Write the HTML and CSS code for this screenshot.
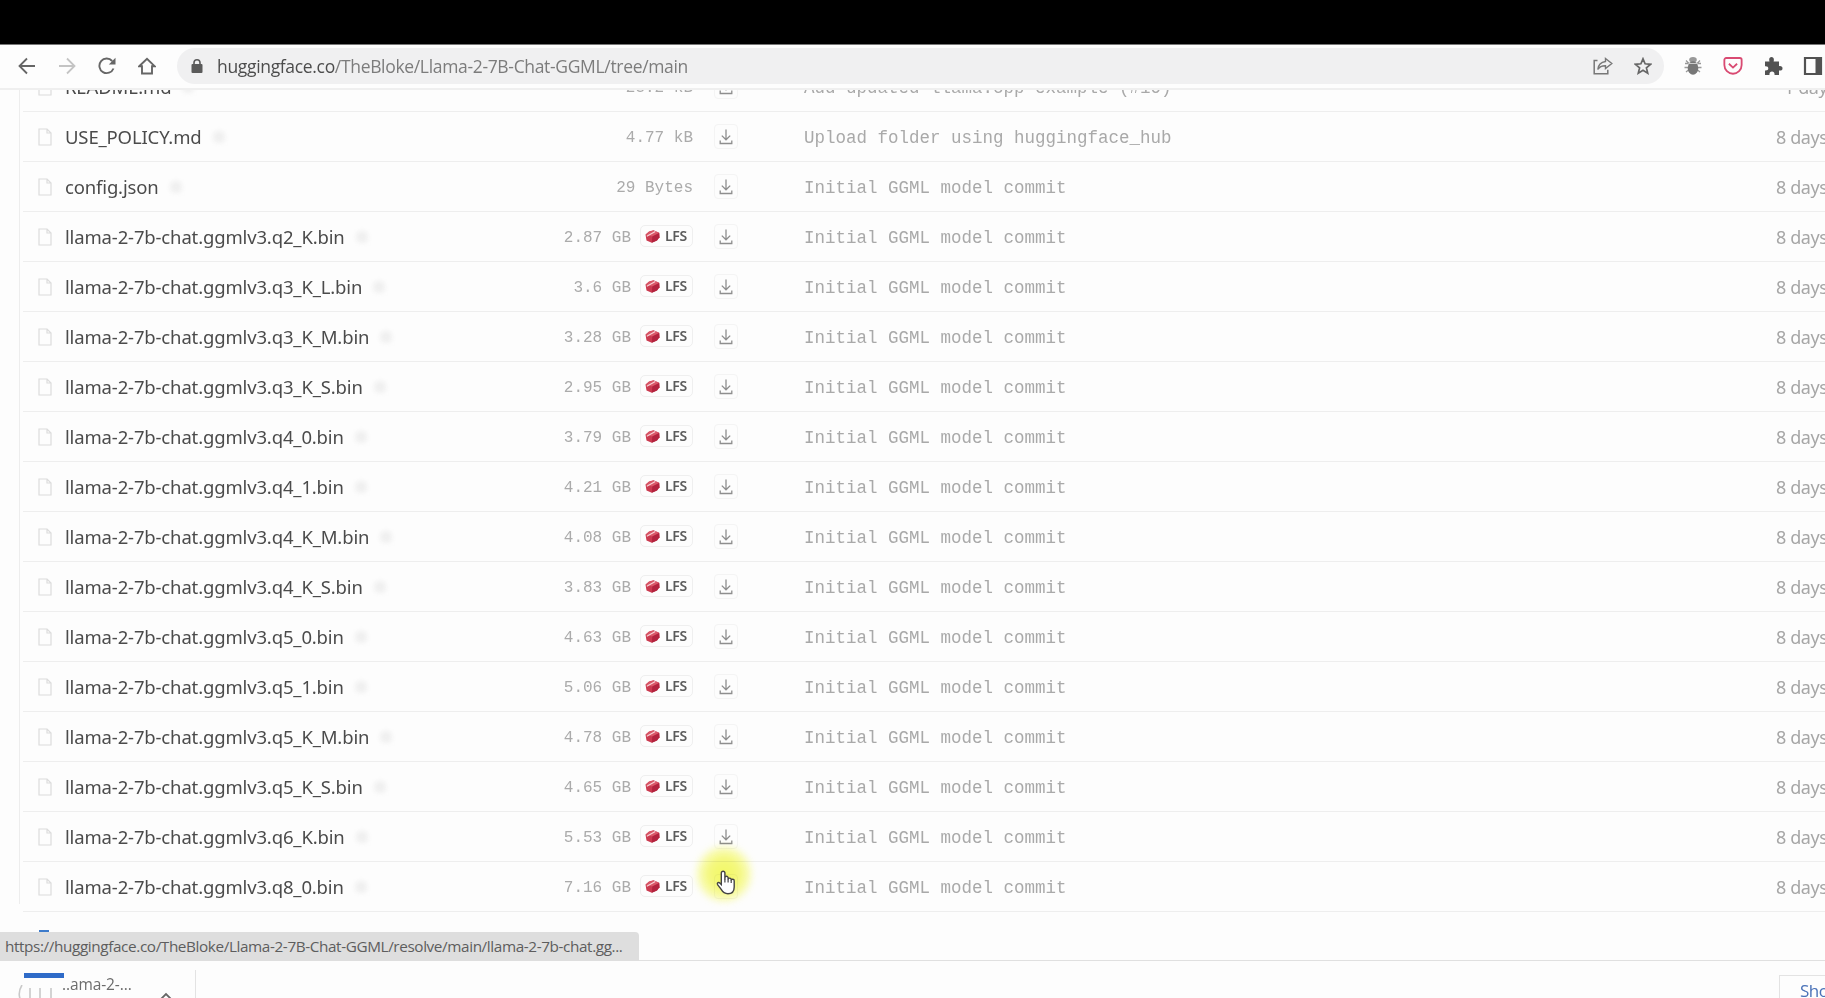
FILE: index.html
```html
<!DOCTYPE html>
<html lang="en">
<head>
<meta charset="utf-8">
<title>TheBloke/Llama-2-7B-Chat-GGML</title>
<link rel="stylesheet" href="styles.css">
</head>
<body>
<svg class="defs" width="0" height="0">
  <symbol id="file" viewBox="0 0 14 18"><path d="M1 1h8l4 4v12H1zM9 1v4h4" fill="none" stroke="currentColor" stroke-width="1.2"/></symbol>
  <symbol id="down" viewBox="0 0 14 16"><path d="M7 .5v10M2.8 6.6 7 10.8l4.200-4.200M1.200 11.500v3h11.600v-3" fill="none" stroke="currentColor" stroke-width="1.300"/></symbol>
  <symbol id="lfs" viewBox="0 0 15 13"><path d="M.5 4.500 4 1.500 8.500.2l5.700 2.600.3 4.500-2.500 3.200-5.200 2.300L1.500 10.500z" fill="#cb3a50"/><path d="M.8 4.800 4 1.800 8.500.4l5.700 2.600L7.300 6.600z" fill="#d95767"/><path d="M7.300 6.600 14.200 3l.2 4.300-2.400 3.200-5.200 2.200z" fill="#b3243f"/><path d="m1.800 6.200 8.500-4.700" stroke="#f8d3d7" stroke-width="1.200"/></symbol>
</svg>
<div class="letterbox"></div>
<header class="toolbar">
  <nav class="nav">
    <svg viewBox="0 0 18 18"><path d="M17 9H2M9 1.500 1.500 9 9 16.500" fill="none" stroke="#666" stroke-width="1.800"/></svg>
    <svg viewBox="0 0 18 18"><path d="M1 9h15M9 1.500 16.500 9 9 16.500" fill="none" stroke="#c4c4c4" stroke-width="1.800"/></svg>
    <svg viewBox="0 0 18 18"><path d="M15.500 11.500A7.300 7.300 0 1 1 14.200 4" fill="none" stroke="#666" stroke-width="1.900"/><path d="M17.500.8v6.700h-6.700z" fill="#666"/></svg>
    <svg viewBox="0 0 18 18"><path d="M1.200 9.300 9 1.800l7.800 7.500H14v7.200H4V9.300z" fill="none" stroke="#666" stroke-width="1.900"/></svg>
  </nav>
  <div class="omnibox">
    <svg class="lock" viewBox="0 0 12 14"><rect x=".5" y="5" width="11" height="9" rx="1" fill="#5a5a5a"/><path d="M3 6V3.800a3 3 0 0 1 6 0V6" fill="none" stroke="#5a5a5a" stroke-width="1.600"/></svg>
    <span class="url"><b>huggingface.co</b>/TheBloke/Llama-2-7B-Chat-GGML/tree/main</span>
    <svg class="share" viewBox="0 0 20 18"><path d="M4.500 3.500H1.200v13.300h13.600v-4" fill="none" stroke="#777" stroke-width="1.500"/><path d="M12.500 1.500 18.800 6.500l-6.300 5V8.700C8.500 8.600 6.300 10 4.800 12.500 5.200 8.500 7.500 5.200 12.500 4.500z" fill="none" stroke="#777" stroke-width="1.400"/></svg>
    <svg class="star" viewBox="0 0 18 18"><path d="m9 1.800 2.100 5 5.400.5-4.100 3.500 1.300 5.300L9 13.200l-4.700 2.900 1.300-5.300L1.500 7.300l5.400-.5z" fill="none" stroke="#666" stroke-width="1.700"/></svg>
  </div>
  <div class="extensions">
    <svg viewBox="0 0 20 20"><path d="M2 7.500h16M1.500 11.500h17M3 16l3-2.500M17 16l-3-2.500M3 4.500l3 3M17 4.500l-3 3" stroke="#999" stroke-width="1.300"/><ellipse cx="10" cy="3.800" rx="3.800" ry="2.800" fill="#999"/><ellipse cx="10" cy="12" rx="5.300" ry="6.800" fill="#777"/><path d="M5.300 7.500h9.400" stroke="#ccc"/></svg>
    <svg viewBox="0 0 22 20"><path d="M3.500 1.200h15a2 2 0 0 1 2 2V9a9.500 9.500 0 0 1-19 0V3.200a2 2 0 0 1 2-2z" fill="none" stroke="#d94a72" stroke-width="2"/><path d="m6.500 7.500 4.500 4.200 4.500-4.200" fill="none" stroke="#d94a72" stroke-width="2"/></svg>
    <svg viewBox="0 0 20 20"><path d="M2 5.500h4.500C5.600 2.500 6.700 1 8.500 1s3 1.500 2.100 4.500H16v4.700c2.300-.4 3.500.6 3.500 2.200s-1.200 2.500-3.500 2.100V19h-4.500c.3-2.300-.8-3.400-2.500-3.400S6.200 16.700 6.500 19H2v-4.500c2.300.2 3.300-.7 3.300-2.200S4.300 10 2 10.200z" fill="#525252"/></svg>
    <svg viewBox="0 0 20 20"><path d="M2 2h16v16H2z" fill="none" stroke="#525252" stroke-width="2.200"/><path d="M12.500 2H18v16h-5.500z" fill="#525252"/></svg>
  </div>
</header>
<main class="page"><div class="files" id="files"></div></main>
<div class="tick"></div>
<div class="status"><span>https://huggingface.co/TheBloke/Llama-2-7B-Chat-GGML/resolve/main/llama-2-7b-chat.gg...</span></div>
<footer class="shelf">
  <div class="download">
    <div class="thumb"><i></i><svg viewBox="0 0 36 16"><path d="M4 0Q-1 8 3 16M12 3v13M22 3v10M33 3v13" fill="none" stroke="#c9c9c9" stroke-width="1.600"/><path d="M13 15h10" stroke="#ddd"/></svg></div>
    <span class="dlname">..ama-2-...</span>
    <svg class="chev" viewBox="0 0 12 8"><path d="m1 7 5-5 5 5" fill="none" stroke="#666" stroke-width="1.800"/></svg>
  </div>
  <div class="showall">Show all</div>
</footer>
<div class="halo"></div>
<svg class="hand" viewBox="0 0 20 25"><path d="M5.300 14.500V3a1.800 1.800 0 0 1 3.600 0v6.500-1.700a1.600 1.600 0 0 1 3.200.2v1.200a1.600 1.600 0 0 1 3.100.3v1a1.500 1.500 0 0 1 3 .4v6c0 4-2.300 6.800-6.300 6.800-3.500 0-5.200-1.700-6.700-4.300L1.600 14.600c-.9-1.700 1-2.900 2.200-1.600z" fill="#fff" stroke="#444" stroke-width="1.400"/><path d="M8.900 9v3.500M12.100 9v3.500M15.200 10v3" stroke="#444" stroke-width="1.200"/></svg>
<script src="files.js"></script>
</body>
</html>
```
FILE: styles.css
```css
* { box-sizing: border-box; }
body { margin: 0; width: 1825px; height: 998px; overflow: hidden; background: #fdfdfd; font-family: "Noto Sans", sans-serif; display: flex; flex-direction: column; position: relative; }
svg { display: block; flex: none; }
.defs { position: absolute; }
.letterbox { height: 45px; background: #000; border-bottom: 1px solid #777; flex: none; }
.toolbar { height: 45px; flex: none; display: flex; align-items: center; background: #fdfdfd; border-bottom: 2px solid #efefef; padding-bottom: 1px; }
.nav { width: 177px; padding-left: 18px; display: flex; gap: 22px; }
.nav svg { width: 18px; height: 18px; }
.omnibox { width: 1487px; height: 36px; border-radius: 18px; background: #f0f0f1; display: flex; align-items: center; }
.lock { width: 12px; height: 14px; margin-left: 14px; }
.url { margin-left: 14px; font: 17.500px/34px "Open Sans", sans-serif; letter-spacing: -0.330px; color: #7c7c7c; white-space: nowrap; }
.url b { font-weight: 400; color: #4c4c4c; }
.share { width: 20px; height: 18px; margin-left: auto; }
.star { width: 18px; height: 18px; margin: 0 12px 0 21px; }
.extensions { display: flex; align-items: center; gap: 20px; padding-left: 19px; }
.extensions svg { width: 20px; height: 20px; }
.page { height: 870px; flex: none; overflow: hidden; padding-left: 19px; }
.files { height: 814px; border-left: 1px solid #ededed; padding-left: 3px; display: flex; flex-direction: column; justify-content: flex-end; }
.row { height: 50px; flex: none; border-bottom: 1px solid #eee; display: grid; grid-template-columns: 42px 498px 130px 21px 24px 66px 1fr 49px; align-items: center; }
.files .row:last-child { margin-bottom: -8px; }
.icon { width: 14px; height: 18px; margin-left: 15px; color: #dcdcdc; }
.name { display: flex; align-items: center; font-size: 18.5px; letter-spacing: -0.150px; color: #4b4b4b; white-space: nowrap; }
.mark { width: 12px; height: 12px; margin-left: 11px; border-radius: 5px; background: #f0f0f0; filter: blur(2px); }
.size { display: flex; justify-content: flex-end; align-items: center; gap: 9px; font: 16px/24px "Liberation Mono", monospace; color: #ababab; white-space: nowrap; padding-top: 2px; }
.badge { display: flex; align-items: center; width: 53px; height: 22px; margin-top: -3px; padding-left: 4px; gap: 5px; border: 1px solid #efefef; border-radius: 5px; font: 600 14px/20px "Noto Sans", sans-serif; letter-spacing: -0.400px; color: #5c5c5c; }
.badge svg { width: 15px; height: 13px; }
.get { width: 24px; height: 25px; border: 1px solid #f4f4f4; border-radius: 4px; display: grid; place-items: center; color: #8e8e8e; grid-column: 5; }
.get svg { width: 14px; height: 16px; }
.message { grid-column: 7; font: 17.500px/24px "Liberation Mono", monospace; color: #a9a9a9; white-space: nowrap; padding-top: 2px; }
.age { font-size: 18px; letter-spacing: -0.400px; color: #a6a6a6; white-space: nowrap; }
.recent { padding-left: 8px; }
.tick { position: absolute; left: 39px; top: 930px; width: 10px; height: 3px; background: #3d7bcb; }
.status { position: absolute; z-index: 1; left: 0; top: 932px; width: 639px; height: 29px; background: #dedede; border-top-right-radius: 4px; padding-left: 5px; font: 15.300px/28px "Open Sans", sans-serif; letter-spacing: -0.390px; color: #5d5d5d; white-space: nowrap; }
.shelf { height: 38px; flex: none; border-top: 1px solid #e0e0e0; display: flex; justify-content: space-between; background: #fdfdfd; overflow: hidden; }
.download { margin-top: 9px; width: 196px; border-right: 1px solid #e3e3e3; display: flex; padding-left: 18px; }
.thumb { width: 44px; padding-top: 3px; }
.thumb i { display: block; width: 40px; height: 5px; margin-left: 6px; background: #2f6bc8; }
.thumb svg { width: 36px; height: 16px; margin-top: 7px; }
.dlname { width: 98px; font: 15.500px/28px "Open Sans", sans-serif; letter-spacing: -0.100px; color: #6c6c6c; }
.chev { width: 12px; height: 8px; margin-top: 22px; }
.showall { width: 46px; margin-top: 14px; padding-left: 20px; border: solid #e3e3e3; border-width: 1px 0 0 1px; font: 17px/30px "Open Sans", sans-serif; letter-spacing: -0.500px; color: #4a72b8; white-space: nowrap; overflow: hidden; }
.halo { position: absolute; left: 694px; top: 844px; width: 60px; height: 60px; border-radius: 50%; background: radial-gradient(circle, #f3f84b 0, #f5fa66 35%, #f9fca0 55%, transparent 72%); opacity: .85; filter: blur(3px); mix-blend-mode: multiply; }
.hand { position: absolute; left: 716px; top: 870px; width: 20px; height: 25px; }
```
FILE: files.js
```js
const bin = (quant, size) => [`llama-2-7b-chat.ggmlv3.${quant}.bin`, size + " GB", "Initial GGML model commit"];
const files = [
  ["README.md", "25.2 kB", "Add updated llama.cpp example (#10)", "1 day"],
  ["USE_POLICY.md", "4.77 kB", "Upload folder using huggingface_hub"],
  ["config.json", "29 Bytes", "Initial GGML model commit"],
  bin("q2_K", "2.87"), bin("q3_K_L", "3.6"), bin("q3_K_M", "3.28"), bin("q3_K_S", "2.95"),
  bin("q4_0", "3.79"), bin("q4_1", "4.21"), bin("q4_K_M", "4.08"), bin("q4_K_S", "3.83"),
  bin("q5_0", "4.63"), bin("q5_1", "5.06"), bin("q5_K_M", "4.78"), bin("q5_K_S", "4.65"),
  bin("q6_K", "5.53"), bin("q8_0", "7.16")
];
const badge = '<span class="badge"><svg><use href="#lfs"/></svg>LFS</span>';
document.getElementById("files").innerHTML = files.map(([name, size, message, age = "8 days"], i) => `
  <div class="row">
    <svg class="icon"><use href="#file"/></svg>
    <div class="name"><span>${name}</span><i class="mark"></i></div>
    <div class="size">${size}${name.endsWith(".bin") ? badge : ""}</div>
    <div class="get">${i < files.length - 1 ? '<svg><use href="#down"/></svg>' : ""}</div>
    <div class="message">${message}</div>
    <div class="age${age === "1 day" ? " recent" : ""}">${age}</div>
  </div>`).join("");
```
